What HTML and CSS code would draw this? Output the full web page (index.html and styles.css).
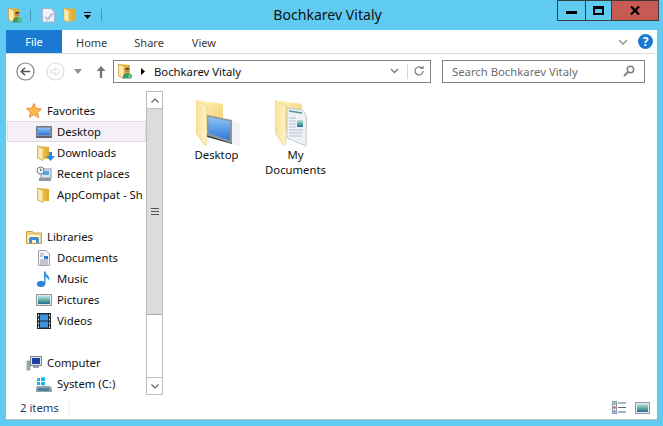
FILE: index.html
```html
<!DOCTYPE html>
<html lang="en">
<head>
<meta charset="utf-8">
<title>Bochkarev Vitaly</title>
<link rel="stylesheet" href="styles.css">
</head>
<body>
<svg class="defs" width="0" height="0" aria-hidden="true">
  <defs>
    <linearGradient id="fold" x1="0" y1="0" x2="1" y2="1"><stop offset="0" stop-color="#fff2b8"/><stop offset="1" stop-color="#f2cf6e"/></linearGradient>
    <linearGradient id="flap" x1="0" y1="0" x2="1" y2="0"><stop offset="0" stop-color="#f9e298"/><stop offset="1" stop-color="#fff3c4"/></linearGradient>
    <linearGradient id="gold" x1="0" y1="0" x2="1" y2="0"><stop offset="0" stop-color="#f0c040"/><stop offset="1" stop-color="#dba92c"/></linearGradient>
    <linearGradient id="scr" x1="0" y1="0" x2="0" y2="1"><stop offset="0" stop-color="#8cc4f5"/><stop offset="1" stop-color="#2a78d8"/></linearGradient>
    <linearGradient id="land" x1="0" y1="0" x2="0" y2="1"><stop offset="0" stop-color="#b9e2ee"/><stop offset=".55" stop-color="#5fa98f"/><stop offset="1" stop-color="#1d6fa5"/></linearGradient>
    <symbol id="folder" viewBox="0 0 16 16">
      <path d="M2 1 L13 2 V14 H2Z" fill="url(#gold)"/>
      <path d="M1.500 1 L7 3.500 V15.500 L1.500 13Z" fill="url(#flap)" stroke="#c89a38" stroke-width=".7"/>
      <path d="M7 3.500 H13 V14 H7Z" fill="url(#gold)"/>
    </symbol>
    <symbol id="userfolder" viewBox="0 0 16 16">
      <use href="#folder"/>
      <circle cx="10" cy="7" r="2.400" fill="#b98a5e"/>
      <path d="M8.500 5 h3.500 v1.500 h-3.500z" fill="#4a3424"/>
      <path d="M5.500 15.500 Q6 10 10 10 Q14 10 14.500 15.500Z" fill="#3f9a6c"/>
      <circle cx="13" cy="13" r="2.200" fill="#5dbb7f"/>
    </symbol>
  </defs>
</svg>
<div class="window">
  <header class="titlebar">
    <div class="quick">
      <svg class="i16"><use href="#userfolder"/></svg>
      <span class="qsep"></span>
      <svg class="qdoc" viewBox="0 0 15 16"><path d="M1.500 1.500H10L13.500 5V15H1.500Z" fill="#eef1f8" stroke="#a9b2cc"/><path d="M4 10l2.500 2.500L12 6" fill="none" stroke="#b7c1d6" stroke-width="2"/></svg>
      <svg class="i16 qfold"><use href="#folder"/></svg>
      <svg class="qdrop" viewBox="0 0 7 7"><path d="M0 0h7v1H0zM0 3h7L3.500 7z" fill="#000"/></svg>
      <span class="qsep last"></span>
    </div>
    <div class="title">Bochkarev Vitaly</div>
    <div class="controls">
      <div class="ctl min"><span class="minbar"></span></div>
      <div class="ctl max"><span class="maxbox"></span></div>
      <div class="ctl close"><svg viewBox="0 0 10 9" class="x"><path d="M1 0.500L9 8.500M9 0.500L1 8.500" stroke="#000" stroke-width="2.200"/></svg></div>
    </div>
  </header>
  <main class="client">
    <nav class="tabs">
      <div class="tab file">File</div>
      <div class="tab home">Home</div>
      <div class="tab share">Share</div>
      <div class="tab view">View</div>
      <div class="tabright">
        <svg class="chev" viewBox="0 0 10 6"><path d="M1 1l4 4 4-4" fill="none" stroke="#9a9a9a" stroke-width="1.600"/></svg>
        <div class="help">?</div>
      </div>
    </nav>
    <div class="addrrow">
      <svg class="nav back" viewBox="0 0 20 20"><circle cx="10" cy="10" r="9" fill="#fff" stroke="#7d7d7d" stroke-width="1.200"/><path d="M15 10H6M9.500 6L5.500 10l4 4" fill="none" stroke="#555" stroke-width="1.600"/></svg>
      <svg class="nav fwd" viewBox="0 0 20 20"><circle cx="10" cy="10" r="9" fill="#fff" stroke="#dcdcdc" stroke-width="1.200"/><path d="M5 8.500h5V6l5 4-5 4v-2.500H5z" fill="#fff" stroke="#dcdcdc"/></svg>
      <svg class="navdrop" viewBox="0 0 8 5"><path d="M0 0h8L4 5z" fill="#8f8f8f"/></svg>
      <svg class="up" viewBox="0 0 10 13"><path d="M5 1L9.500 6H6.200V13H3.800V6H.5Z" fill="#777"/></svg>
      <div class="address">
        <svg class="i16 addricon"><use href="#userfolder"/></svg>
        <svg class="crumb" viewBox="0 0 4 7"><path d="M0 0l4 3.500L0 7z" fill="#000"/></svg>
        <span class="path">Bochkarev Vitaly</span>
        <svg class="adrop" viewBox="0 0 9 6"><path d="M1 1l3.500 3.500L8 1" fill="none" stroke="#777" stroke-width="1.300"/></svg>
        <span class="asep"></span>
        <svg class="refresh" viewBox="0 0 12 12"><path d="M10 6a4 4 0 1 1-1.300-3" fill="none" stroke="#777" stroke-width="1.200"/><path d="M10.500 .5v3.500H7z" fill="#777"/></svg>
      </div>
      <div class="search">
        <span class="stext">Search Bochkarev Vitaly</span>
        <svg class="lens" viewBox="0 0 12 12"><circle cx="7.500" cy="4.500" r="3.200" fill="none" stroke="#808080" stroke-width="1.500"/><path d="M5 7L1 11" stroke="#808080" stroke-width="2"/></svg>
      </div>
    </div>
    <div class="body">
      <aside class="sidebar">
        <div class="tree">
          <div class="row top"><svg class="i16" viewBox="0 0 16 16"><path d="M8 .5l2.200 5 5.300.5-4 3.500 1.200 5.300L8 11.500l-4.700 2.800 1.200-5.300-4-3.500 5.300-.5z" fill="#fdb94a" stroke="#e8732c" stroke-width=".8"/></svg><span>Favorites</span></div>
          <div class="row sub sel"><svg class="i16 wide" viewBox="0 0 16 16"><rect x="0.500" y="2.500" width="15" height="10" fill="#8b95a5" stroke="#6e7889"/><rect x="2" y="4" width="12" height="7" fill="url(#scr)"/><rect x="0" y="12" width="16" height="2" fill="#5b6472"/></svg><span>Desktop</span></div>
          <div class="row sub"><svg class="i16"><use href="#folder"/></svg><svg class="overlay" viewBox="0 0 9 9"><path d="M3 0h3v4h3L4.500 9 0 4h3z" fill="#2a8fe0"/></svg><span>Downloads</span></div>
          <div class="row sub"><svg class="i16" viewBox="0 0 16 16"><rect x="5" y="3" width="10" height="9" fill="#dfe5ee" stroke="#8a93a0"/><rect x="7" y="5" width="6" height="4" fill="#58a4e8"/><rect x="3" y="12" width="12" height="3" fill="#8f97a3"/><circle cx="4.500" cy="4.500" r="3.500" fill="#f4f6f8" stroke="#6e7680"/><path d="M4.500 2.500v2h1.500" fill="none" stroke="#333" stroke-width=".7"/></svg><span>Recent places</span></div>
          <div class="row sub"><svg class="i16"><use href="#folder"/></svg><span class="clip">AppCompat - Sh</span></div>
          <div class="gap"></div>
          <div class="row top"><svg class="i16" viewBox="0 0 16 16"><path d="M0.500 2.500h6l1 1.500h8v10.500h-15z" fill="#efd483" stroke="#c9a24d"/><path d="M2 6h12v8H2z" fill="#fff3c8"/><path d="M3 14V10q0-2 2-2h6q2 0 2 2v4h-3v-3H6v3z" fill="#3f8fd2"/></svg><span>Libraries</span></div>
          <div class="row sub"><svg class="i16" viewBox="0 0 16 16"><path d="M2.500 .5H10L13.500 4v11.500H2.500Z" fill="#f5f6fa" stroke="#9aa2b3"/><path d="M4 4h4M4 6h3M4 12h8M4 10h8M4 14h8" stroke="#8e96a8"/><rect x="8" y="6" width="4" height="3" fill="#2f7fc8"/></svg><span>Documents</span></div>
          <div class="row sub"><svg class="i16" viewBox="0 0 16 16"><ellipse cx="5" cy="13" rx="4.200" ry="3" fill="#2b82d8"/><path d="M8 13V.5h1.500q.5 3 3 4.500 1.500 1.500 .5 5-.5-3-3.500-4V13z" fill="#3a93e3"/></svg><span>Music</span></div>
          <div class="row sub"><svg class="i16" viewBox="0 0 16 16"><rect x="0.500" y="2.500" width="15" height="11" fill="#e7e9ee" stroke="#8d929c"/><rect x="2" y="4" width="12" height="8" fill="url(#land)"/></svg><span>Pictures</span></div>
          <div class="row sub"><svg class="i16" viewBox="0 0 16 16"><rect x="1" y="0" width="14" height="16" fill="#1f2a33"/><rect x="4" y="1.500" width="8" height="6" fill="#3f94dc"/><rect x="4" y="8.500" width="8" height="6" fill="#3f94dc"/><path d="M2 1.500h1v2H2zM2 5.500h1v2H2zM2 9.500h1v2H2zM2 13h1v2H2zM13 1.500h1v2h-1zM13 5.500h1v2h-1zM13 9.500h1v2h-1zM13 13h1v2h-1z" fill="#dfe8ef"/></svg><span>Videos</span></div>
          <div class="gap"></div>
          <div class="row top"><svg class="i16" viewBox="0 0 16 16"><rect x="4.500" y="1.500" width="11" height="9" fill="#dfe4ec" stroke="#7e8694"/><rect x="6" y="3" width="8" height="6" fill="#1c3fa8"/><path d="M7 11h6v2H7z" fill="#9aa2ae"/><rect x="1" y="6" width="3" height="9" fill="#aab1bb" stroke="#6d7480" stroke-width=".6"/><rect x="1.600" y="8" width="1.800" height="1" fill="#5cc05c"/></svg><span>Computer</span></div>
          <div class="row sub"><svg class="i16" viewBox="0 0 16 16"><path d="M1 2.500l3-.5v3H1zM5 1.800L9 1v4H5zM1 6h3v3H1zM5 6h4v3.500L5 9z" fill="#14b4ee"/><path d="M1 10h13l2 2v4H0v-4z" fill="#9aa3ad"/><rect x="1.500" y="12" width="12" height="3" fill="#4d7f96"/><rect x="13" y="12.500" width="1.500" height="2" fill="#54d04e"/></svg><span>System (C:)</span></div>
        </div>
        <div class="scroll">
          <div class="sbtn"><svg viewBox="0 0 8 5" class="sarrow"><path d="M.5 4.500L4 1l3.500 3.500" fill="none" stroke="#606060" stroke-width="1.200"/></svg></div>
          <div class="thumb"><span class="grip"></span></div>
          <div class="track"></div>
          <div class="sbtn"><svg viewBox="0 0 8 5" class="sarrow"><path d="M.5 .5L4 4l3.500-3.500" fill="none" stroke="#606060" stroke-width="1.200"/></svg></div>
        </div>
      </aside>
      <section class="files">
        <div class="item">
          <svg class="big" viewBox="0 0 46 50">
            <path d="M4 .5L27 4V30H4Z" fill="url(#fold)"/>
            <path d="M36 20l8 4v22l-8-2z" fill="#e9ecf1" opacity=".7"/>
            <path d="M11 15L36 20V43L11 35Z" fill="#8d95a2"/>
            <path d="M12.500 17L34 21.200V40.500L12.500 33Z" fill="url(#scr)"/>
            <path d="M11 35L36 43v1L11 37z" fill="#3a4048"/>
            <path d="M0 0L10.700 6V45H8.500L0 33Z" fill="url(#flap)" stroke="#e3c272" stroke-width=".5"/>
          </svg>
          <span class="label">Desktop</span>
        </div>
        <div class="item">
          <svg class="big" viewBox="0 0 46 50">
            <path d="M4 .5L27 4V30H4Z" fill="url(#fold)"/>
            <path d="M12 8L27 10Q31 12 31.500 19L31 46L12 38Z" fill="#eef1f6" stroke="#aeb5c4" stroke-width=".7"/>
            <path d="M14 11L27 13" stroke="#4d9a92" stroke-width="1.600"/>
            <rect x="22" y="20" width="6" height="7" fill="url(#land)"/>
            <path d="M14 18h7M14 21h7M14 24h7M14 27h7M14 30h14M14 33h14M14 36h13" stroke="#b9bfca"/>
            <path d="M0 0L10.700 6V45H8.500L0 33Z" fill="url(#flap)" stroke="#e3c272" stroke-width=".5"/>
          </svg>
          <span class="label">My<br>Documents</span>
        </div>
      </section>
    </div>
    <footer class="status">
      <span class="count">2 items</span>
      <span class="ssep"></span>
      <div class="views">
        <svg class="vdetails" viewBox="0 0 15 13"><rect x=".5" y=".5" width="4" height="12" fill="#e6eaf1" stroke="#8c97ab"/><rect x="1.500" y="5.500" width="2" height="2" fill="#c0392b"/><rect x="1.500" y="1.500" width="2" height="2" fill="#6d9b6d"/><rect x="1.500" y="9.500" width="2" height="2" fill="#4b7fb0"/><path d="M6 2h8M6 6.500h8M6 11h8" stroke="#5c6b80" stroke-width="1.200"/></svg>
        <svg class="vthumb" viewBox="0 0 15 12"><rect x=".5" y=".5" width="14" height="11" fill="#e5e8ee" stroke="#8d97a8"/><rect x="2" y="2" width="11" height="8" fill="url(#land)"/></svg>
      </div>
    </footer>
  </main>
</div>
</body>
</html>
```
FILE: styles.css
```css
* { box-sizing: border-box; }
html, body { margin: 0; padding: 0; }
body {
  width: 663px;
  height: 426px;
  overflow: hidden;
  background: #60cbf1;
  font-family: "Noto Sans", "Open Sans", sans-serif;
  font-size: 11.300px;
  color: #000;
}
.defs { display: block; height: 0; }
svg { display: block; flex: none; }
.i16 { width: 16px; height: 16px; }

.window { display: flex; flex-direction: column; height: 426px; padding: 0 6px 7px; }

.titlebar {
  display: grid;
  grid-template-columns: 1fr auto 1fr;
  height: 30px;
  margin: 0 -6px;
  padding: 0 4px 0 7px;
}
.quick { display: flex; align-items: center; height: 30px; }
.qsep { width: 1px; height: 12px; background: #4c93b5; margin-left: 7px; }
.qsep.last { margin-left: 10px; }
.qdoc { width: 15px; height: 16px; margin-left: 10px; }
.qfold { margin-left: 6px; }
.qdrop { width: 7px; height: 7px; margin-left: 6px; }
.title { font-size: 14.100px; line-height: 30px; color: #111; margin-right: 11px; }
.controls { display: flex; justify-content: flex-end; height: 21px; }
.ctl {
  height: 21px;
  border: 1px solid #3b3b3b;
  border-left: 0;
  display: flex;
  align-items: center;
  justify-content: center;
}
.ctl.min { width: 29px; border-left: 1px solid #3b3b3b; }
.ctl.max { width: 26px; }
.ctl.close { width: 47px; background: #c75a52; }
.minbar { width: 11px; height: 3px; background: #000; margin-top: 4px; }
.maxbox { width: 11px; height: 9px; border: 2px solid #000; border-top-width: 3px; }
.x { width: 10px; height: 9px; }

.client {
  flex: 1;
  display: flex;
  flex-direction: column;
  background: #fff;
  box-shadow: 0 1px 0 #b5c4cc;
  min-height: 0;
}

.tabs { display: flex; height: 24px; border-bottom: 1px solid #dadbdc; flex: none; }
.tab { line-height: 25px; color: #3b3b3b; font-size: 11px; }
.tab.file { width: 56px; background: #1a79d1; color: #fff; text-align: center; line-height: 24px; }
.tab.home { margin-left: 14px; }
.tab.share { margin-left: 27px; }
.tab.view { margin-left: 28px; }
.tabright { margin-left: auto; display: flex; align-items: center; gap: 10px; padding-right: 4px; }
.chev { width: 10px; height: 6px; }
.help {
  width: 15px; height: 15px; border-radius: 50%;
  background: #1a79d1; color: #fff;
  font: bold 12px/15px "Noto Sans", sans-serif;
  text-align: center;
}

.addrrow { display: flex; align-items: center; height: 34px; flex: none; padding: 0 12px 0 10px; }
.nav { width: 19px; height: 19px; }
.fwd { margin-left: 11px; }
.navdrop { width: 8px; height: 5px; margin-left: 9px; }
.up { width: 10px; height: 13px; margin-left: 14px; }
.address, .search {
  height: 23px;
  display: flex;
  align-items: center;
  border: 1px solid #818181;
}
.address { width: 318px; margin-left: 7px; padding: 0 5px 0 3px; }
.addricon { margin-right: 8px; }
.crumb { width: 4px; height: 7px; margin-right: 9px; }
.path { flex: 1; color: #111; }
.adrop { width: 9px; height: 6px; }
.asep { width: 1px; height: 15px; background: #d6d6d6; margin: 0 5px 0 8px; }
.refresh { width: 12px; height: 12px; }
.search { width: 203px; margin-left: 11px; padding: 0 9px; justify-content: space-between; }
.stext { color: #6d6d6d; }
.lens { width: 12px; height: 12px; }

.body { flex: 1; display: flex; min-height: 0; }
.sidebar { display: flex; width: 157px; flex: none; }
.tree { width: 140px; padding-top: 12px; overflow: hidden; }
.row { position: relative; display: flex; align-items: center; height: 21px; white-space: nowrap; color: #111; }
.row.top { padding-left: 20px; gap: 5px; }
.row.sub { padding-left: 30px; gap: 5px; }
.row.sel { background: #f5f0f6; box-shadow: inset 0 0 0 1px #e0dce2; margin-left: 1px; padding-left: 29px; }
.gap { height: 21px; }
.overlay { position: absolute; left: 40px; top: 10px; width: 9px; height: 9px; }
.clip { white-space: nowrap; }

.scroll {
  width: 17px;
  margin: 3px 0 1px;
  display: flex;
  flex-direction: column;
  align-items: stretch;
  border: 1px solid #bdbdbd;
}
.sbtn { height: 16px; display: flex; align-items: center; justify-content: center; flex: none; }
.sarrow { width: 8px; height: 5px; }
.thumb {
  height: 207px;
  flex: none;
  background: #dcdcdc;
  border-top: 1px solid #bdbdbd;
  border-bottom: 1px solid #a8a8a8;
  display: flex;
  align-items: center;
  justify-content: center;
}
.grip { width: 8px; height: 7px; border-top: 1px solid #555; border-bottom: 1px solid #555; background: linear-gradient(#555, #555) center / 100% 1px no-repeat; }
.track { flex: 1; border-bottom: 1px solid #bdbdbd; }

.files { flex: 1; display: flex; align-items: flex-start; padding: 12px 0 0 14px; }
.item { width: 79px; display: flex; flex-direction: column; align-items: center; }
.big { width: 46px; height: 50px; margin-left: 5px; }
.label { text-align: center; line-height: 15px; color: #111; margin-top: -3px; }

.status { height: 23px; display: flex; align-items: center; flex: none; padding: 0 7px 0 14px; }
.count { color: #1e395b; }
.ssep { width: 1px; height: 14px; background: #eeeeee; margin-left: 10px; }
.views { margin-left: auto; display: flex; align-items: center; gap: 8px; }
.vdetails { width: 15px; height: 13px; }
.vthumb { width: 15px; height: 12px; }
```
